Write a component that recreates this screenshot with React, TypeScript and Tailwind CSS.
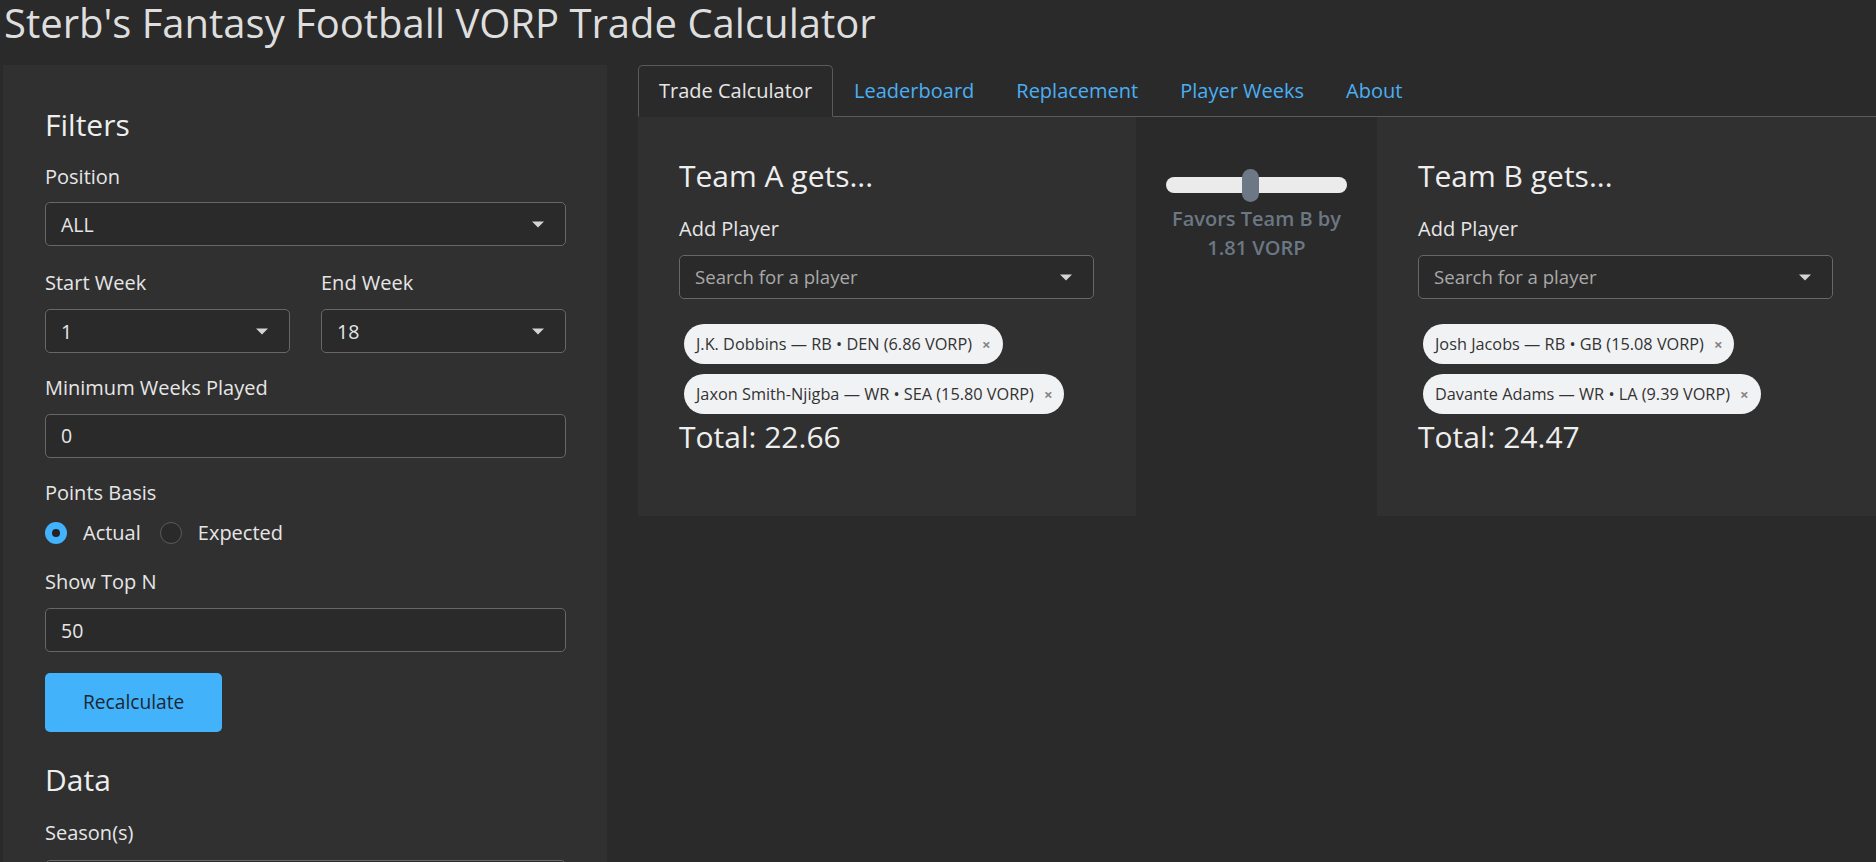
import React from 'react';

// Shiny-style dark layout: title, sidebar filters, tabbed trade calculator

type Chip = { label: string };

const teamA: Chip[] = [
  { label: 'J.K. Dobbins — RB • DEN (6.86 VORP)' },
  { label: 'Jaxon Smith-Njigba — WR • SEA (15.80 VORP)' },
];

const teamB: Chip[] = [
  { label: 'Josh Jacobs — RB • GB (15.08 VORP)' },
  { label: 'Davante Adams — WR • LA (9.39 VORP)' },
];

const tabs = ['Trade Calculator', 'Leaderboard', 'Replacement', 'Player Weeks', 'About'];

const Caret = () => (
  <svg width="12" height="7" viewBox="0 0 12 7" className="shrink-0">
    <path d="M0 0.5h12L6 6.5z" fill="#d4d4d4" />
  </svg>
);

const SelectBox = ({ value, placeholder }: { value?: string; placeholder?: string }) => (
  <div className="h-[44px] w-full border border-[#676767] rounded-[5px] bg-[#2a2a2a] flex items-center justify-between pl-[15px] pr-[21px]">
    {value ? (
      <span className="text-[19.5px] text-[#e6e6e6]">{value}</span>
    ) : (
      <span className="text-[18.6px] text-[#a9a9a9]">{placeholder}</span>
    )}
    <Caret />
  </div>
);

const TextBox = ({ value }: { value: string }) => (
  <div className="h-[44px] w-full border border-[#676767] rounded-[5px] bg-[#2a2a2a] flex items-center pl-[15px]">
    <span className="text-[19.5px] text-[#e6e6e6]">{value}</span>
  </div>
);

const Label = ({ children, className = '' }: { children: React.ReactNode; className?: string }) => (
  <div className={`leading-[28.8px] text-[#e6e6e6] ${className}`}>{children}</div>
);

const H4 = ({ children, className = '' }: { children: React.ReactNode; className?: string }) => (
  <h4 className={`text-[30px] leading-[34.56px] text-[#eeeeee] ${className}`}>{children}</h4>
);

const Radio = ({ checked, label }: { checked?: boolean; label: string }) => (
  <div className="flex items-center">
    {checked ? (
      <div className="w-[22px] h-[22px] rounded-full bg-[#42b3fa] flex items-center justify-center">
        <div className="w-[8px] h-[8px] rounded-full bg-[#232323]" />
      </div>
    ) : (
      <div className="w-[22px] h-[22px] rounded-full border border-[#5a5a5a] bg-[#2a2a2a]" />
    )}
    <span className="ml-[16px] text-[#e6e6e6]">{label}</span>
  </div>
);

const PlayerChip = ({ label }: Chip) => (
  <div className="inline-flex items-center h-[40px] rounded-full bg-[#f1f2f4] pl-[12px] pr-[12px]">
    <span className="text-[16.3px] text-[#333333] leading-[25px]">{label}</span>
    <span className="ml-[10px] text-[15px] font-bold text-[#858585] leading-none">×</span>
  </div>
);

const TeamCard = ({ title, chips, total }: { title: string; chips: Chip[]; total: string }) => (
  <div className="bg-[#303030] pl-[41px] pt-[42px] pb-[61px]">
    <H4>{title}</H4>
    <Label className="mt-[22px]">Add Player</Label>
    <div className="mt-[11px] w-[415px]">
      <SelectBox placeholder="Search for a player" />
    </div>
    <div className="mt-[25px] pl-[5px] flex flex-col items-start gap-[10px]">
      {chips.map((c) => (
        <PlayerChip key={c.label} label={c.label} />
      ))}
    </div>
    <H4 className="mt-[6px]">Total: {total}</H4>
  </div>
);

export default function App() {
  const diff = 24.47 - 22.66;
  const thumbLeft = 76;

  return (
    <div className="h-[862px] overflow-hidden bg-[#2a2a2a] text-[20px] text-[#e6e6e6] font-['Open_Sans','Noto_Sans','DejaVu_Sans',sans-serif]">
      <h1 className="text-[40px] leading-[46px] pl-[4px] text-[#dedede] font-normal">
        Sterb's Fantasy Football VORP Trade Calculator
      </h1>

      <div className="flex mt-[19px] items-start">
        {/* Sidebar */}
        <aside className="ml-[3px] w-[604px] shrink-0 h-[820px] bg-[#303030] pl-[42px] pr-[41px] pt-[43px]">
          <H4>Filters</H4>

          <Label className="mt-[20px]">Position</Label>
          <div className="mt-[11px]">
            <SelectBox value="ALL" />
          </div>

          <div className="grid grid-cols-2 gap-x-[31px] mt-[23px]">
            <div>
              <Label>Start Week</Label>
              <div className="mt-[11px]">
                <SelectBox value="1" />
              </div>
            </div>
            <div>
              <Label>End Week</Label>
              <div className="mt-[11px]">
                <SelectBox value="18" />
              </div>
            </div>
          </div>

          <Label className="mt-[21px]">Minimum Weeks Played</Label>
          <div className="mt-[11px]">
            <TextBox value="0" />
          </div>

          <Label className="mt-[21px]">Points Basis</Label>
          <div className="mt-[11px] h-[28.8px] flex items-center">
            <Radio checked label="Actual" />
            <div className="ml-[19px]">
              <Radio label="Expected" />
            </div>
          </div>

          <Label className="mt-[20px]">Show Top N</Label>
          <div className="mt-[12px]">
            <TextBox value="50" />
          </div>

          <button className="mt-[21px] h-[59px] px-[38px] rounded-[5px] bg-[#42b3fa] text-[19.2px] text-[#1c2733] leading-[28.8px]">
            Recalculate
          </button>

          <H4 className="mt-[31px]">Data</H4>
          <Label className="mt-[21px]">Season(s)</Label>
          <div className="mt-[12px] h-[44px] w-full border border-[#676767] rounded-[5px] bg-[#2a2a2a]" />
        </aside>

        {/* Main panel */}
        <main className="ml-[31px] flex-1 min-w-0">
          <div className="flex border-b border-[#5a5a5a]">
            {tabs.map((t, i) => (
              <div
                key={t}
                className={
                  i === 0
                    ? '-mb-px px-[20px] py-[10.5px] leading-[28.8px] border border-[#5a5a5a] border-b-[#2a2a2a] rounded-t-[5px] text-[#e6e6e6]'
                    : '-mb-px px-[20px] py-[10.5px] leading-[28.8px] border border-transparent text-[#4aaff4]'
                }
              >
                {t}
              </div>
            ))}
          </div>

          <div className="grid grid-cols-[498px_241px_1fr]">
            <TeamCard title="Team A gets..." chips={teamA} total="22.66" />

            <div className="flex flex-col items-center pt-[60px]">
              <div className="relative w-[181px] h-[16px] rounded-full bg-[#ebebeb]">
                <div
                  className="absolute top-[-8px] w-[17px] h-[33px] rounded-full bg-[#6c7885]"
                  style={{ left: thumbLeft }}
                />
              </div>
              <div className="mt-[12px] w-[185px] text-center leading-[28.8px] font-semibold text-[#6c7784]">
                Favors Team B by {diff.toFixed(2)} VORP
              </div>
            </div>

            <TeamCard title="Team B gets..." chips={teamB} total="24.47" />
          </div>
        </main>
      </div>
    </div>
  );
}
